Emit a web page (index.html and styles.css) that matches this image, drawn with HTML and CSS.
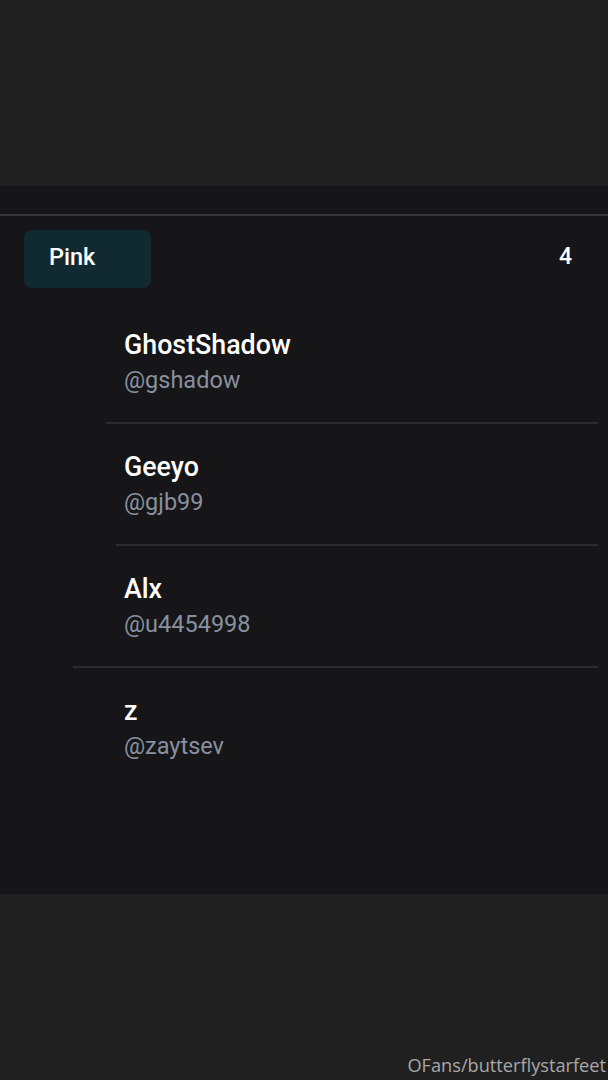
FILE: index.html
```html
<!DOCTYPE html>
<html lang="en">
<head>
    <meta charset="UTF-8">
    <meta name="viewport" content="width=device-width, initial-scale=1.0">
    <title>Pink</title>
    <link rel="stylesheet" href="styles.css">
</head>
<body>
    <div class="top"></div>
    <div class="panel">
        <div class="panel-header">
            <div class="chip">Pink</div>
            <div class="count">4</div>
        </div>
        <ul class="members">
            <li class="member inset-a">
                <div class="name">GhostShadow</div>
                <div class="handle">@gshadow</div>
            </li>
            <li class="member inset-b">
                <div class="name">Geeyo</div>
                <div class="handle">@gjb99</div>
            </li>
            <li class="member inset-c">
                <div class="name">Alx</div>
                <div class="handle">@u4454998</div>
            </li>
            <li class="member last">
                <div class="name">z</div>
                <div class="handle">@zaytsev</div>
            </li>
        </ul>
    </div>
    <div class="bottom">
        <span class="watermark">OFans/butterflystarfeet</span>
    </div>
</body>
</html>
```

FILE: styles.css
```css
body {
    margin: 0;
    background: #202020;
    font-family: Roboto, "Noto Sans", sans-serif;
    color: #ffffff;
    height: 1080px;
    display: flex;
    flex-direction: column;
}

.top {
    height: 186px;
    background: #212121;
}

.panel {
    height: 708px;
    background: #161618;
}

.panel-header {
    margin-top: 28px;
    border-top: 2px solid #35363a;
    padding: 14px 36px 0 24px;
    display: flex;
    justify-content: space-between;
    align-items: flex-start;
}

.chip {
    width: 102px;
    height: 58px;
    padding-left: 25px;
    box-sizing: content-box;
    background: #112a31;
    border-radius: 8px;
    font-size: 23.5px;
    font-weight: 500;
    line-height: 54px;
}

.count {
    font-size: 23px;
    font-weight: 500;
    line-height: 54px;
}

.members {
    list-style: none;
    margin: 14px 0 0;
    padding: 0;
}

.member {
    margin-right: 10px;
    padding: 25px 0;
    height: 70px;
    border-bottom: 2px solid #2c2d30;
}

.member.inset-a {
    margin-left: 106px;
    padding-left: 18px;
}

.member.inset-b {
    margin-left: 116px;
    padding-left: 8px;
}

.member.inset-c {
    margin-left: 73px;
    padding-left: 51px;
}

.member.last {
    margin-left: 124px;
    border-bottom: none;
}

.name {
    font-size: 26.8px;
    font-weight: 500;
    line-height: 36px;
}

.handle {
    font-size: 23.5px;
    line-height: 34px;
    color: #8890a0;
}

.bottom {
    flex: 1;
    background: #202020;
    display: flex;
    justify-content: flex-end;
    align-items: flex-end;
}

.watermark {
    font-family: "Open Sans", sans-serif;
    font-size: 18.2px;
    color: #a8a8a8;
    padding: 0 2px 3px 0;
}
```
